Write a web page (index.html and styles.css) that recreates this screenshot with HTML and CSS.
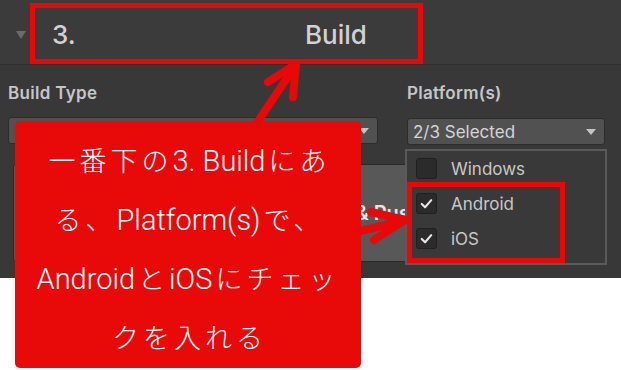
FILE: index.html
```html
<!DOCTYPE html>
<html lang="ja">
<head>
  <meta charset="UTF-8" />
  <meta name="viewport" content="width=device-width, initial-scale=1.0" />
  <title>Build</title>
  <link rel="stylesheet" href="styles.css">
</head>
<body>
  <div class="panel">
    <div class="header">
      <span class="fold"></span>
      <div class="title-box">
        <span class="num">3.</span>
        <span class="name">Build</span>
      </div>
    </div>
    <div class="content">
      <div class="fields">
        <div class="field build-type">
          <label>Build Type</label>
          <div class="dropdown"><span></span><i class="caret"></i></div>
        </div>
        <div class="field platform">
          <label>Platform(s)</label>
          <div class="dropdown"><span>2/3 Selected</span><i class="caret"></i></div>
        </div>
      </div>
      <div class="build-btn">Build &amp; Push</div>
    </div>
  </div>

  <div class="menu">
    <div class="item">
      <span class="check"></span>
      <span>Windows</span>
    </div>
    <div class="item">
      <span class="check"><svg viewBox="0 0 20 20"><polyline points="5,10.5 8.5,14 15,6.5" /></svg></span>
      <span>Android</span>
    </div>
    <div class="item">
      <span class="check"><svg viewBox="0 0 20 20"><polyline points="5,10.5 8.5,14 15,6.5" /></svg></span>
      <span>iOS</span>
    </div>
    <div class="highlight"></div>
  </div>

  <div class="callout">
    <span class="jp">一番下の</span>3. Build<span class="jp">にあ</span><br>
    <span class="jp">る、</span>Platform(s)<span class="jp">で、</span><br>
    Android<span class="jp">と</span>iOS<span class="jp">にチェッ</span><br>
    <span class="jp">クを入れる</span>
  </div>

  <svg class="arrows" width="621" height="370" viewBox="0 0 621 370">
    <!-- 上の矢印 -->
    <line x1="255" y1="126" x2="295" y2="66" />
    <polyline points="268,82 296,64 293,97" />
    <!-- 右の矢印 -->
    <line x1="360" y1="231" x2="403" y2="221" />
    <polyline points="371,212 405,220 374,240" />
  </svg>
</body>
</html>
```

FILE: styles.css
```css
body {
  margin: 0;
  background: #fff;
  font-family: Inter, "Noto Sans", sans-serif;
  width: 621px;
  height: 370px;
  position: relative;
  overflow: hidden;
}
.panel {
  height: 278px;
  background: #383838;
}
.header {
  height: 65px;
  display: flex;
  align-items: flex-start;
  padding: 3px 0 0 16px;
  box-sizing: border-box;
  background: #3b3b3b;
  border-bottom: 1px solid #303030;
}
.fold {
  width: 0;
  height: 0;
  border-left: 5px solid transparent;
  border-right: 5px solid transparent;
  border-top: 8px solid #6c6c6c;
  margin: 28px 4px 0 0;
}
.title-box {
  width: 393px;
  height: 61px;
  box-sizing: border-box;
  border: 5px solid #e80808;
  display: flex;
  align-items: center;
  padding: 2px 0 0 17px;
  color: #d2d2d2;
  font-size: 26px;
  font-weight: 500;
}
.num { width: 253px; }
.content {
  padding: 17px 16px 0 8px;
}
.fields {
  display: flex;
  gap: 29px;
}
.field { display: flex; flex-direction: column; }
.build-type { width: 370px; }
.platform { width: 198px; }
.platform .dropdown { margin-top: 1px; }
label {
  font-size: 17px;
  font-weight: 600;
  line-height: 22px;
  letter-spacing: 0.3px;
  color: #c6c6c6;
  margin-bottom: 13px;
}
.dropdown {
  height: 27px;
  box-sizing: border-box;
  background: #515151;
  border: 1px solid #2c2c2c;
  border-radius: 3px;
  display: flex;
  align-items: center;
  justify-content: space-between;
  padding: 0 8px 0 5px;
  color: #d4d4d4;
  font-size: 17px;
}
.caret {
  width: 0;
  height: 0;
  border-left: 5px solid transparent;
  border-right: 5px solid transparent;
  border-top: 6px solid #c4c4c4;
}
.build-btn {
  margin: 19px 0 0 5px;
  width: 592px;
  height: 98px;
  box-sizing: border-box;
  background: #585858;
  border: 1px solid #2a2a2a;
  border-radius: 3px;
  display: flex;
  align-items: center;
  padding-left: 288px;
  color: #e4e4e4;
  font-size: 20px;
  font-weight: 600;
}
.menu {
  position: absolute;
  left: 405px;
  top: 149px;
  width: 202px;
  height: 116px;
  box-sizing: border-box;
  background: #393939;
  border: 2px solid #5a5a5a;
  padding: 0 0 0 9px;
}
.item {
  height: 35px;
  display: flex;
  align-items: center;
  gap: 14px;
  color: #c8c8c8;
  font-size: 17px;
}
.check {
  width: 21px;
  height: 21px;
  box-sizing: border-box;
  background: #2b2b2b;
  border: 1px solid #202020;
  border-radius: 3px;
  display: flex;
}
.check svg { width: 19px; height: 19px; }
.check polyline {
  fill: none;
  stroke: #e8e8e8;
  stroke-width: 2.2;
  stroke-linecap: round;
  stroke-linejoin: round;
}
.highlight {
  position: absolute;
  left: 0;
  top: 31px;
  width: 158px;
  height: 81px;
  box-sizing: border-box;
  border: 5px solid #e80808;
}
.callout {
  position: absolute;
  left: 15px;
  top: 121px;
  width: 346px;
  height: 247px;
  box-sizing: border-box;
  background: #e80909;
  border-radius: 5px;
  padding-top: 10px;
  color: #fff;
  text-align: center;
  font-family: Roboto, "Noto Sans CJK JP", sans-serif;
  font-weight: 300;
  font-size: 29px;
  line-height: 58px;
}
.jp {
  font-family: "Noto Sans CJK JP", sans-serif;
  font-weight: 300;
  font-size: 27px;
  letter-spacing: 4px;
  margin-left: 3px;
}
.arrows {
  position: absolute;
  left: 0;
  top: 0;
  pointer-events: none;
}
.arrows line, .arrows polyline {
  fill: none;
  stroke: #e80808;
  stroke-width: 8;
  stroke-linecap: round;
  stroke-linejoin: round;
}
```
